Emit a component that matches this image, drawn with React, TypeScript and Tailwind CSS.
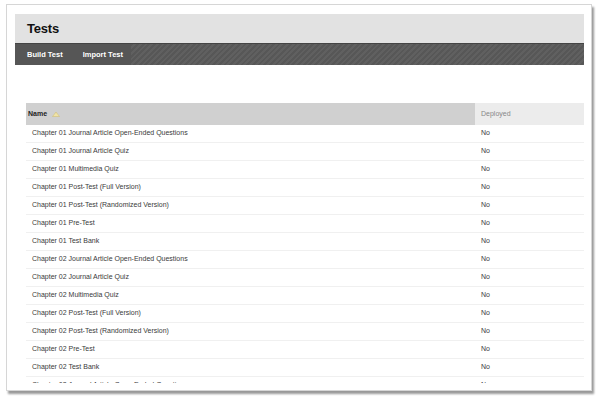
const rows = [
  "Chapter 01 Journal Article Open-Ended Questions",
  "Chapter 01 Journal Article Quiz",
  "Chapter 01 Multimedia Quiz",
  "Chapter 01 Post-Test (Full Version)",
  "Chapter 01 Post-Test (Randomized Version)",
  "Chapter 01 Pre-Test",
  "Chapter 01 Test Bank",
  "Chapter 02 Journal Article Open-Ended Questions",
  "Chapter 02 Journal Article Quiz",
  "Chapter 02 Multimedia Quiz",
  "Chapter 02 Post-Test (Full Version)",
  "Chapter 02 Post-Test (Randomized Version)",
  "Chapter 02 Pre-Test",
  "Chapter 02 Test Bank",
  "Chapter 03 Journal Article Open-Ended Questions",
];

const App = () => {
  return (
    <div className="w-[598px] h-[398px] bg-white pl-[6px] pt-[4px] font-['Liberation_Sans',Arial,sans-serif]">
      <div className="w-[586px] h-[387px] bg-white border border-[#d6d6d6] shadow-[2px_3px_2px_rgba(0,0,0,0.4)] pl-[8px] pr-[7px] pt-[9px]">
        {/* clipped screen area */}
        <div className="h-[369px] overflow-hidden">
          {/* page header */}
          <div className="h-[29px] bg-[#e2e2e2] flex items-center pl-[12px]">
            <h1 className="text-[13px] font-bold text-[#111] tracking-[-0.2px]">Tests</h1>
          </div>
          {/* action bar */}
          <div className="h-[22px] flex border-t border-[#444] bg-[repeating-linear-gradient(135deg,#606060_0px,#606060_2px,#575757_2px,#575757_4px)]">
            <div className="flex items-center bg-[#565656] w-[116px] pl-[12px] gap-[20px] text-white text-[7.5px] font-bold">
              <span>Build Test</span>
              <span>Import Test</span>
            </div>
          </div>

          {/* table */}
          <div className="ml-[11px] mt-[38px]">
            <div className="flex h-[22px]">
              <div className="w-[449px] bg-[#d0d0d0] flex items-center pl-[2px] gap-[5px]">
                <span className="text-[7px] font-bold text-[#222]">Name</span>
                <svg width="8" height="6" viewBox="0 0 8 6">
                  <path d="M0.5 5.5 L4 1 L7.5 5.5 Z" fill="#f1e4a6" stroke="#cfbd78" strokeWidth="0.6" />
                </svg>
              </div>
              <div className="flex-1 bg-[#ececec] flex items-center pl-[6px] text-[7px] text-[#888]">
                Deployed
              </div>
            </div>
            {rows.map((name, i) => (
              <div key={i} className="flex h-[18px] border-b border-[#f0f0f0] text-[7px] text-[#3a3a3a]">
                <div className="w-[449px] flex items-center pl-[6px]">{name}</div>
                <div className="flex-1 flex items-center pl-[6px]">No</div>
              </div>
            ))}
          </div>
        </div>
      </div>
    </div>
  );
};

export default App;
